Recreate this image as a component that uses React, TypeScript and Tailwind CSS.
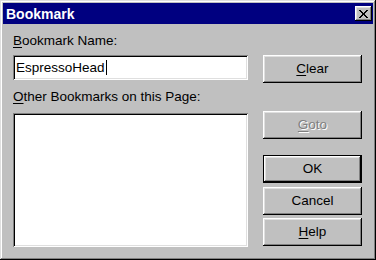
import React from "react";

const raised =
  "shadow-[inset_-1px_-1px_#000,inset_1px_1px_#fff,inset_-2px_-2px_#808080,inset_2px_2px_#dfdfdf]";
const sunken =
  "shadow-[inset_1px_1px_#808080,inset_-1px_-1px_#fff,inset_2px_2px_#000,inset_-2px_-2px_#dfdfdf]";

const Key = ({ children }: { children: React.ReactNode }) => (
  <span className="underline underline-offset-2">{children}</span>
);

const Button = ({
  children,
  isDefault,
  disabled,
  className = "",
}: {
  children: React.ReactNode;
  isDefault?: boolean;
  disabled?: boolean;
  className?: string;
}) => (
  <div className={`h-[28px] w-[99px] ${isDefault ? "border border-black" : ""} ${className}`}>
    <button
      className={`flex h-full w-full items-center justify-center bg-[#c0c0c0] ${raised} ${
        disabled ? "text-[#808080] [text-shadow:1px_1px_0_#fff]" : "text-black"
      }`}
    >
      {children}
    </button>
  </div>
);

export default function App() {
  return (
    <div
      className="flex h-[260px] w-[376px] flex-col bg-[#c0c0c0] p-[3px] text-[13.5px] leading-[16px] text-black shadow-[inset_-1px_-1px_#000,inset_1px_1px_#dfdfdf,inset_-2px_-2px_#808080,inset_2px_2px_#fff]"
      style={{ fontFamily: '"Liberation Sans", Arial, sans-serif' }}
    >
      {/* title bar */}
      <div className="flex h-[21px] items-center justify-between bg-[#000080] pl-[3px] pr-[1px]">
        <span className="text-[14px] font-bold text-white">Bookmark</span>
        <button className={`flex h-[15px] w-[17px] items-center justify-center bg-[#c0c0c0] ${raised}`}>
          <svg width="9" height="8" viewBox="0 0 9 8" shapeRendering="crispEdges">
            <path
              d="M0 0h2v1h-2zM7 0h2v1h-2zM1 1h2v1h-2zM6 1h2v1h-2zM2 2h2v1h-2zM5 2h2v1h-2zM3 3h3v1h-3zM3 4h3v1h-3zM2 5h2v1h-2zM5 5h2v1h-2zM1 6h2v1h-2zM6 6h2v1h-2zM0 7h2v1h-2zM7 7h2v1h-2z"
              fill="#000"
            />
          </svg>
        </button>
      </div>

      {/* body */}
      <div className="flex flex-1 pl-[10px] pr-[11px]">
        <div className="flex w-[235px] flex-col pt-[9px]">
          <div>
            <Key>B</Key>ookmark Name:
          </div>
          <div className={`mt-[6px] flex h-[25px] items-center bg-white pl-[3px] text-[13.5px] ${sunken}`}>
            <span>EspressoHead</span>
            <span className="ml-[1px] h-[15px] w-[1px] bg-black" />
          </div>
          <div className="mt-[9px]">
            <Key>O</Key>ther Bookmarks on this Page:
          </div>
          <div className={`mt-[8px] h-[134px] bg-white ${sunken}`} />
        </div>

        <div className="ml-[15px] flex flex-col pt-[31px]">
          <Button>
            <Key>C</Key>lear
          </Button>
          <Button disabled className="mt-[28px]">
            <Key>G</Key>oto
          </Button>
          <Button isDefault className="mt-[16px]">
            OK
          </Button>
          <Button className="mt-[4px]">Cancel</Button>
          <Button className="mt-[3px]">
            <Key>H</Key>elp
          </Button>
        </div>
      </div>
    </div>
  );
}
